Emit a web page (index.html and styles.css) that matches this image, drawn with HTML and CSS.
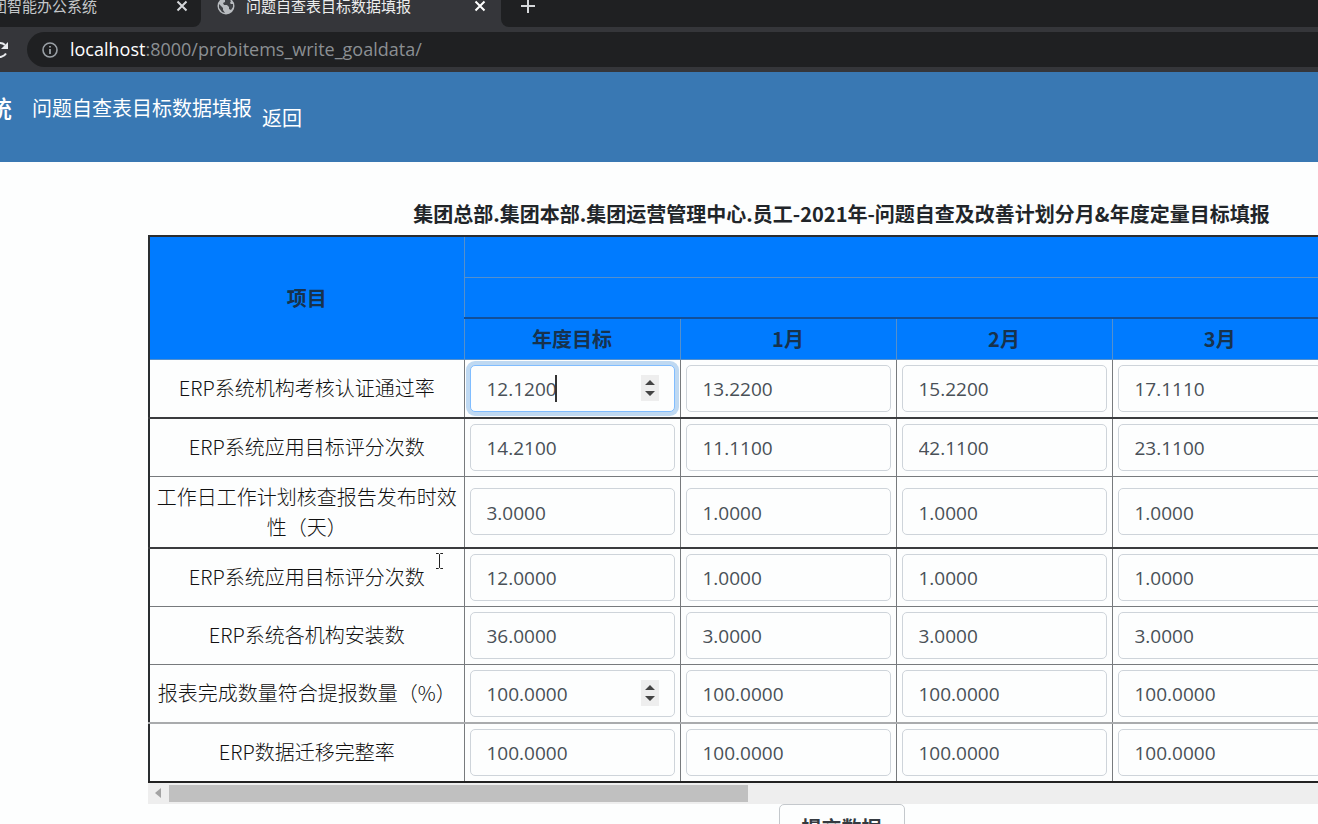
FILE: index.html
```
<!DOCTYPE html>
<html lang="zh-CN">
<head>
<meta charset="utf-8">
<title>问题自查表目标数据填报</title>
<link rel="stylesheet" href="styles.css">
</head>
<body>
<div class="tabs">
  <div class="tab tab-first">
    <span class="tab-title">团智能办公系统</span>
    <button class="icon-btn" aria-label="关闭标签"><svg width="12" height="12" viewBox="0 0 12 12"><path d="M1.5 1.5l9 9M10.5 1.5l-9 9"/></svg></button>
  </div>
  <div class="tab tab-active">
    <svg class="globe" width="18" height="18" viewBox="0 0 18 18"><circle cx="9" cy="9" r="8.5" fill="#b9bcc0"/><path d="M2 7l4 4v2l2 3-3-1-3-4zM10 2l-2 1v2l-2 1 1 2h3l2 2v2l2 1 2-3v-3l-2 0-1-1 1-2-2-2z" fill="#404246"/></svg>
    <span class="tab-title">问题自查表目标数据填报</span>
    <button class="icon-btn" aria-label="关闭标签"><svg width="12" height="12" viewBox="0 0 12 12"><path d="M1.5 1.5l9 9M10.5 1.5l-9 9"/></svg></button>
  </div>
  <div class="tab-rest">
    <button class="icon-btn" aria-label="新建标签"><svg width="16" height="16" viewBox="0 0 16 16"><path d="M8 1v14M1 8h14"/></svg></button>
  </div>
</div>
<div class="toolbar">
  <button class="icon-btn reload" aria-label="重新加载"><svg width="9" height="18" viewBox="9 0 9 18"><path d="M15 12.5A7 7 0 1 1 14 4" fill="none"/><path d="M17 1v7h-7z" fill="#e8eaed" stroke="none"/></svg></button>
  <div class="address">
    <svg width="16" height="16" viewBox="0 0 16 16"><circle cx="8" cy="8" r="7" fill="none" stroke="#9aa0a6" stroke-width="1.6"/><path d="M8 7v5M8 4v1.6" stroke="#9aa0a6" stroke-width="1.8"/></svg>
    <span class="url"><b>localhost</b>:8000/probitems_write_goaldata/</span>
  </div>
</div>
<header class="navbar">
  <span class="brand"><span>统</span></span>
  <span class="nav-title">问题自查表目标数据填报</span>
  <a class="nav-back" href="#">返回</a>
</header>
<main class="report">
  <h1>集团总部.集团本部.集团运营管理中心.员工-2021年-问题自查及改善计划分月&amp;年度定量目标填报</h1>
  <table>
    <colgroup><col class="col-item"><col class="col-val"><col class="col-val"><col class="col-val"><col class="col-val"></colgroup>
    <thead>
      <tr><th rowspan="3" scope="col">项目</th><th colspan="4"></th></tr>
      <tr class="strong"><th colspan="4"></th></tr>
      <tr class="months"><th scope="col">年度目标</th><th scope="col">1月</th><th scope="col">2月</th><th scope="col">3月</th></tr>
    </thead>
    <tbody>
      <tr class="strong"><th scope="row">ERP系统机构考核认证通过率</th>
        <td><div class="field"><input class="focused" type="number" aria-label="年度目标" value="12.1200"><span class="caret"></span><svg class="spin" width="18" height="26" viewBox="0 0 18 26"><path d="M4 10L9 5l5 5zM4 16L9 21l5-5z"/></svg></div></td>
        <td><input type="number" aria-label="1月" value="13.2200"></td><td><input type="number" aria-label="2月" value="15.2200"></td><td><input type="number" aria-label="3月" value="17.1110"></td></tr>
      <tr><th scope="row">ERP系统应用目标评分次数</th>
        <td><input type="number" aria-label="年度目标" value="14.2100"></td><td><input type="number" aria-label="1月" value="11.1100"></td><td><input type="number" aria-label="2月" value="42.1100"></td><td><input type="number" aria-label="3月" value="23.1100"></td></tr>
      <tr class="strong"><th scope="row">工作日工作计划核查报告发布时效性（天）</th>
        <td><input type="number" aria-label="年度目标" value="3.0000"></td><td><input type="number" aria-label="1月" value="1.0000"></td><td><input type="number" aria-label="2月" value="1.0000"></td><td><input type="number" aria-label="3月" value="1.0000"></td></tr>
      <tr><th scope="row">ERP系统应用目标评分次数</th>
        <td><input type="number" aria-label="年度目标" value="12.0000"></td><td><input type="number" aria-label="1月" value="1.0000"></td><td><input type="number" aria-label="2月" value="1.0000"></td><td><input type="number" aria-label="3月" value="1.0000"></td></tr>
      <tr><th scope="row">ERP系统各机构安装数</th>
        <td><input type="number" aria-label="年度目标" value="36.0000"></td><td><input type="number" aria-label="1月" value="3.0000"></td><td><input type="number" aria-label="2月" value="3.0000"></td><td><input type="number" aria-label="3月" value="3.0000"></td></tr>
      <tr class="soft"><th scope="row">报表完成数量符合提报数量（%）</th>
        <td><div class="field"><input type="number" aria-label="年度目标" value="100.0000"><svg class="spin" width="18" height="26" viewBox="0 0 18 26"><path d="M4 10L9 5l5 5zM4 16L9 21l5-5z"/></svg></div></td>
        <td><input type="number" aria-label="1月" value="100.0000"></td><td><input type="number" aria-label="2月" value="100.0000"></td><td><input type="number" aria-label="3月" value="100.0000"></td></tr>
      <tr class="last"><th scope="row">ERP数据迁移完整率</th>
        <td><input type="number" aria-label="年度目标" value="100.0000"></td><td><input type="number" aria-label="1月" value="100.0000"></td><td><input type="number" aria-label="2月" value="100.0000"></td><td><input type="number" aria-label="3月" value="100.0000"></td></tr>
    </tbody>
  </table>
  <div class="scrollbar">
    <svg width="21" height="20" viewBox="0 0 21 20"><path d="M13 5v10l-6-5z" fill="#a3a3a3"/></svg>
    <div class="thumb"></div>
  </div>
  <button class="submit">提交数据</button>
</main>
<svg class="pointer" width="9" height="18" viewBox="0 0 9 18"><path d="M1 1.500h2.500l1 1 1-1H8M4.500 2.500v13M1 16.500h2.500l1-1 1 1H8" fill="none" stroke="#222" stroke-width="1"/></svg>
</body>
</html>
```
FILE: styles.css
```
* { box-sizing: border-box; }

body {
  margin: 0;
  height: 100vh;
  overflow: hidden;
  position: relative;
  background: #fdfefe;
  color: #212529;
  font: 20px/30px "Noto Sans CJK SC", sans-serif;
}

button { font: inherit; cursor: pointer; }

.icon-btn {
  display: flex;
  padding: 0;
  border: 0;
  background: none;
  stroke: #d5d7da;
  stroke-width: 2;
}

/* Browser tabs */
.tabs {
  display: flex;
  height: 42px;
  margin-top: -15px;
  background: #35363a;
  font-size: 15px;
  color: #c4c7ca;
}
.tab { display: flex; align-items: center; }
.tab-title { white-space: nowrap; }
.tab-first {
  width: 201px;
  padding-right: 13px;
  justify-content: space-between;
  background: #1f2022;
  border-bottom-right-radius: 8px;
}
.tab-first .tab-title {
  width: 97px;
  display: flex;
  justify-content: flex-end;
}
.tab-active {
  width: 300px;
  padding: 0 15px 0 16px;
  color: #eceded;
}
.tab-active .icon-btn { margin-left: auto; stroke: #fff; }
.globe { margin-right: 11px; }
.tab-rest {
  flex: 1;
  display: flex;
  align-items: center;
  padding-left: 19px;
  background: #1f2022;
  border-bottom-left-radius: 8px;
}

/* Address bar */
.toolbar {
  display: flex;
  align-items: center;
  height: 45px;
  background: #35363a;
}
.reload { width: 27px; stroke: #e8eaed; }
.address {
  flex: 1;
  display: flex;
  align-items: center;
  gap: 12px;
  height: 35px;
  padding-left: 15px;
  background: #1f2022;
  border-radius: 18px 0 0 18px;
}
.url {
  padding-bottom: 2px;
  color: #8b8f93;
  font: 18px/24px "Open Sans", sans-serif;
}
.url b { color: #fff; font-weight: 400; }

/* Page header */
.navbar {
  display: flex;
  align-items: flex-start;
  height: 90px;
  padding-top: 21px;
  background: #3978b3;
  color: #fff;
}
.brand {
  width: 12px;
  margin-right: 20px;
  display: flex;
  justify-content: flex-end;
  font-size: 24px;
  font-weight: 500;
}
.nav-title { margin-right: 10px; }
.nav-back { margin-top: 10px; color: #fff; text-decoration: none; }

/* The report is wider than the window and runs off its right side */
.report {
  margin: 0 -217px 0 148px;
  padding-top: 37px;
}
h1 {
  margin: 0 0 6px;
  font-size: 20px;
  line-height: 30px;
  text-align: center;
}
table {
  width: 1179px;
  table-layout: fixed;
  border-collapse: collapse;
  border: 2px solid #2b2e31;
}
.col-item { width: 315px; }
.col-val { width: 216px; }
th, td {
  padding: 5px;
  border: 1px solid #777a7d;
  text-align: center;
}
thead th {
  height: 41px;
  background: #007bff;
  color: #17324d;
  border-color: #5590cc;
}
thead .strong th { border-bottom: 2px solid #12509a; }
thead .months th { padding-bottom: 4px; }
tbody th { color: #111; font-weight: 300; }
tbody .strong > * { border-bottom: 2px solid #3a3c3e; }
tbody .soft > * { border-bottom: 2px solid #a9abad; }
tbody .last > * { border-bottom: 2px solid #222; }

input {
  display: block;
  width: 100%;
  height: 47px;
  padding: 2px 16px 0;
  border: 1px solid #ced4da;
  border-radius: 5px;
  background: #fdfefe;
  color: #495057;
  font: 19px/30px "Open Sans", sans-serif;
  appearance: textfield;
}
input::-webkit-inner-spin-button { display: none; }
input.focused, input:focus {
  border-color: #80bdff;
  outline: 0;
  box-shadow: 0 0 0 4px #bfd9f2;
}
.field { position: relative; }
.caret {
  position: absolute;
  left: 85px;
  top: 10px;
  width: 2px;
  height: 27px;
  background: #333;
}
.spin {
  position: absolute;
  right: 16px;
  top: 10px;
  background: #eee;
  fill: #444;
}

.scrollbar {
  display: flex;
  align-items: center;
  height: 21px;
  background: #eee;
}
.thumb { width: 579px; height: 17px; background: #c0c0c0; }

.submit {
  display: block;
  margin: 0 auto;
  height: 48px;
  padding: 0 22px;
  border: 1px solid #c4c8cc;
  border-radius: 5px;
  background: #fdfefe;
  color: #343a40;
  font-weight: 700;
}

.pointer { position: absolute; left: 435px; top: 552px; }
```
